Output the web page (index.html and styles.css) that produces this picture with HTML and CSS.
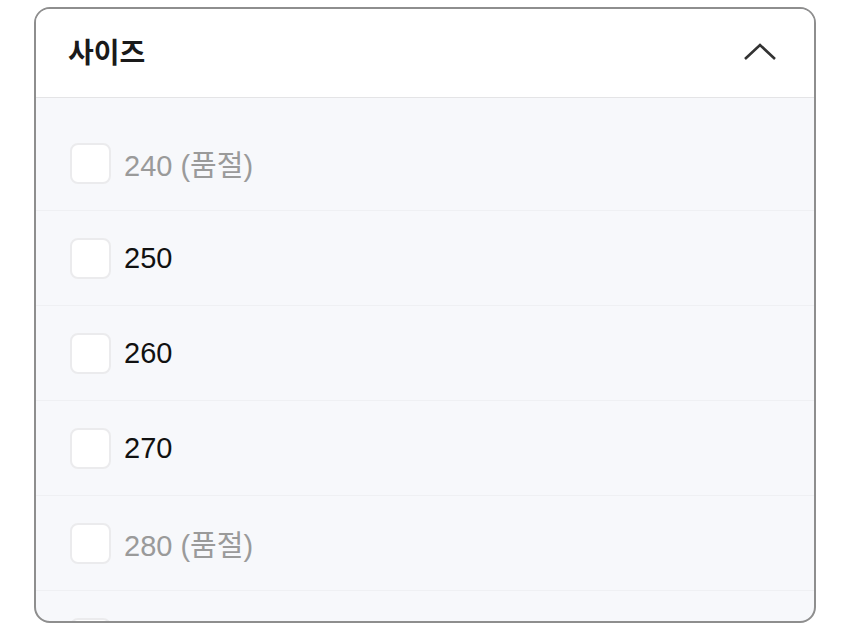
FILE: index.html
```html
<!DOCTYPE html>
<html lang="ko">
  <head>
    <meta charset="UTF-8" />
    <meta name="viewport" content="width=device-width, initial-scale=1.0" />
    <title>사이즈 필터</title>
    <link rel="stylesheet" href="styles.css">
  </head>
  <body>
    <main class="filtro">
      <div class="filtro-topo">
        <h2>사이즈</h2>
        <svg class="seta" width="34" height="20" viewBox="0 0 34 20">
          <polyline points="2,17 17,3 32,17" fill="none" stroke="#333" stroke-width="2.6" />
        </svg>
      </div>
      <ul class="lista">
        <li class="item esgotado"><span class="caixa"></span>240 (품절)</li>
        <li class="item"><span class="caixa"></span>250</li>
        <li class="item"><span class="caixa"></span>260</li>
        <li class="item"><span class="caixa"></span>270</li>
        <li class="item esgotado"><span class="caixa"></span>280 (품절)</li>
        <li class="item"><span class="caixa"></span></li>
      </ul>
    </main>
  </body>
</html>
```

FILE: styles.css
```css
* {
  margin: 0;
  padding: 0;
  box-sizing: border-box;
  font-family: "Liberation Sans", "Noto Sans CJK KR", sans-serif;
}

body {
  background-color: #fff;
}

.filtro {
  margin: 7px 34px 0;
  height: 616px;
  border: 2px solid #8e8e8e;
  border-radius: 16px;
  overflow: hidden;
  background-color: #f7f8fb;
}

.filtro-topo {
  display: flex;
  justify-content: space-between;
  align-items: center;
  height: 89px;
  padding: 0 37px 0 32px;
  background-color: #fff;
  border-bottom: 1px solid #e4e4e6;
}

.filtro-topo h2 {
  font-size: 28px;
  font-weight: bold;
  color: #1a1a1a;
  padding-bottom: 4px;
}

.seta {
  margin-bottom: 3px;
}

.lista {
  list-style: none;
  padding-top: 18px;
}

.item {
  display: flex;
  align-items: center;
  height: 95px;
  padding-left: 34px;
  border-bottom: 1px solid #eff0f3;
  font-size: 29px;
  color: #111;
}

.item.esgotado {
  color: #9a9a9a;
}

.caixa {
  width: 41px;
  height: 41px;
  margin-right: 13px;
  border: 2px solid #ebebed;
  border-radius: 8px;
  background-color: #fff;
}
```
